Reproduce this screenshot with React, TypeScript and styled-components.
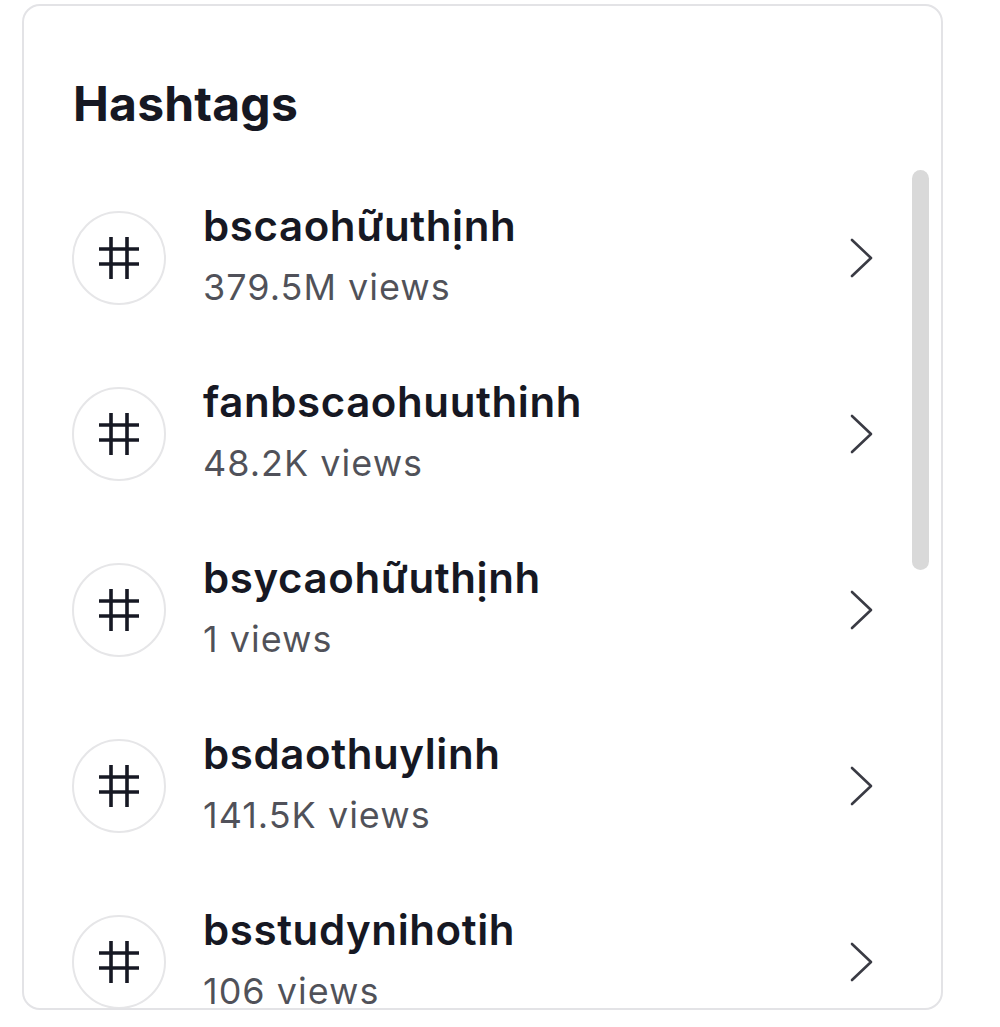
import React from 'react';
import styled, { createGlobalStyle } from 'styled-components';

const GlobalStyle = createGlobalStyle`
  html, body {
    margin: 0;
    padding: 0;
    background: #ffffff;
  }
  body {
    font-family: Inter, "Noto Sans", sans-serif;
    color: #161823;
  }
`;

const Page = styled.div`
  padding: 4px 0 0 22px;
`;

const Card = styled.section`
  box-sizing: border-box;
  width: 921px;
  height: 1006px;
  border: 2px solid #e3e3e6;
  border-radius: 18px;
  display: flex;
  flex-direction: column;
  overflow: hidden;
`;

const Title = styled.h2`
  margin: 0;
  padding: 74px 0 0 49px;
  height: 90px;
  font-size: 48px;
  font-weight: 700;
  line-height: 1;
  letter-spacing: 0.2px;
  color: #161823;
`;

const Body = styled.div`
  flex: 1;
  min-height: 0;
  display: flex;
  padding-right: 12px;
`;

const List = styled.ul`
  list-style: none;
  margin: 0;
  padding: 0;
  flex: 1;
  overflow: hidden;
`;

const Track = styled.div`
  flex: none;
  width: 17px;
`;

const Thumb = styled.div`
  height: 400px;
  border-radius: 9px;
  background: #d9d9d9;
`;

const Row = styled.li`
  height: 176px;
  display: flex;
  align-items: center;
  padding: 0 38px 0 48px;
  cursor: pointer;
`;

const Badge = styled.div`
  box-sizing: border-box;
  flex: none;
  width: 94px;
  height: 94px;
  border-radius: 50%;
  border: 2px solid #e6e6e8;
  display: flex;
  align-items: center;
  justify-content: center;
`;

const Info = styled.div`
  flex: 1;
  margin-left: 37px;
  padding-bottom: 6px;
  display: flex;
  flex-direction: column;
  min-width: 0;
`;

const Tag = styled.span`
  font-size: 42px;
  font-weight: 600;
  line-height: 50px;
  letter-spacing: 0.6px;
  color: #161823;
  white-space: nowrap;
`;

const Views = styled.span`
  font-size: 36px;
  font-weight: 400;
  line-height: 44px;
  letter-spacing: 1px;
  margin-top: 14px;
  color: rgba(22, 24, 35, 0.75);
`;

const HashIcon = () => (
  <svg width="40" height="42" viewBox="0 0 40 42" fill="none" stroke="#161823" strokeWidth="3.6">
    <line x1="12" y1="0" x2="12" y2="42" />
    <line x1="28" y1="0" x2="28" y2="42" />
    <line x1="0" y1="12" x2="40" y2="12" />
    <line x1="0" y1="27" x2="40" y2="27" />
  </svg>
);

const Chevron = () => (
  <svg width="24" height="40" viewBox="0 0 24 40" fill="none" stroke="#3a3b44" strokeWidth="2.6" strokeLinecap="round" strokeLinejoin="round">
    <path d="M2 2 L21 20 L2 38" />
  </svg>
);

const hashtags = [
  { name: 'bscaohữuthịnh', views: '379.5M views' },
  { name: 'fanbscaohuuthinh', views: '48.2K views' },
  { name: 'bsycaohữuthịnh', views: '1 views' },
  { name: 'bsdaothuylinh', views: '141.5K views' },
  { name: 'bsstudynihotih', views: '106 views' },
];

const App: React.FC = () => (
  <>
    <GlobalStyle />
    <Page>
      <Card>
        <Title>Hashtags</Title>
        <Body>
          <List>
            {hashtags.map((tag) => (
              <Row key={tag.name}>
                <Badge>
                  <HashIcon />
                </Badge>
                <Info>
                  <Tag>{tag.name}</Tag>
                  <Views>{tag.views}</Views>
                </Info>
                <Chevron />
              </Row>
            ))}
          </List>
          <Track>
            <Thumb />
          </Track>
        </Body>
      </Card>
    </Page>
  </>
);

export default App;
